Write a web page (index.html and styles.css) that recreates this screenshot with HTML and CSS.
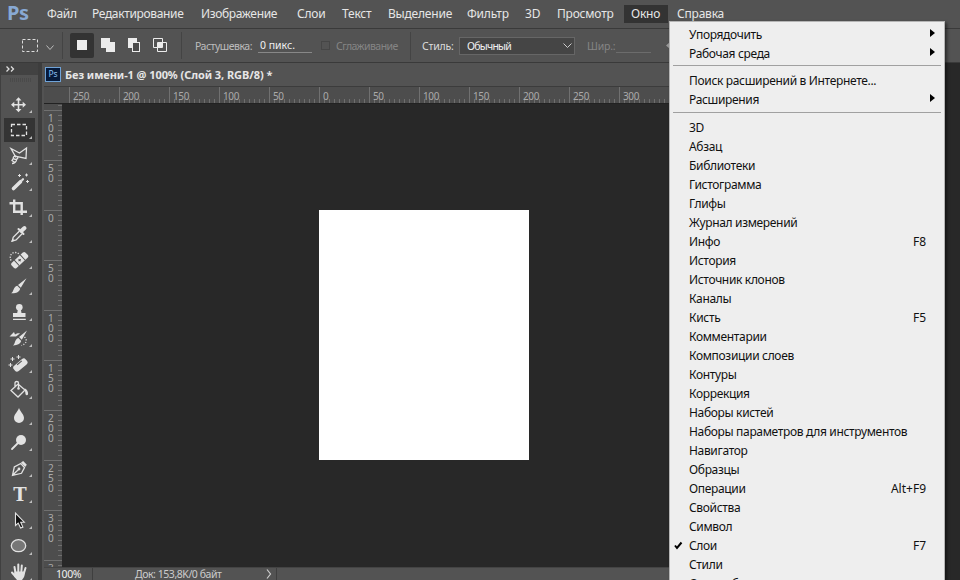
FILE: index.html
```html
<!DOCTYPE html>
<html lang="ru">
<head>
    <meta charset="UTF-8">
    <meta name="viewport" content="width=device-width, initial-scale=1.0">
    <title>Без имени-1</title>
    <link rel="stylesheet" href="styles.css">
</head>
<body>
    <nav class="menubar">
        <span class="logo">Ps</span>
        <span>Файл</span>
        <span>Редактирование</span>
        <span>Изображение</span>
        <span>Слои</span>
        <span>Текст</span>
        <span>Выделение</span>
        <span>Фильтр</span>
        <span>3D</span>
        <span>Просмотр</span>
        <span class="open">Окно</span>
        <span>Справка</span>
    </nav>

    <div class="options">
        <svg class="opt-marquee" width="62" height="33" viewBox="0 0 62 33">
            <rect x="22.5" y="10.5" width="15" height="12" fill="none" stroke="#ddd" stroke-dasharray="3 2"/>
            <path d="M46.500 16.500l3.500 4 3.500-4" fill="none" stroke="#bbb"/>
        </svg>
        <svg class="opt-modes" width="120" height="33" viewBox="62 0 120 33">
            <path d="M62.500 3v27M181.500 3v27" stroke="#444"/>
            <rect x="70" y="4" width="24" height="25" rx="2" fill="#333"/>
            <rect x="77" y="11" width="10" height="10" fill="#ececec"/>
            <path d="M101 9h9v4h5v10h-9v-4h-5z" fill="#ececec"/>
            <path d="M128 9h9v4h-4v6h-5z" fill="#ececec"/>
            <rect x="132.500" y="13.500" width="7" height="9" fill="#4a4a4a" stroke="#ececec"/>
            <path d="M153.500 9.500h9v9h-9zM157.500 13.500h9v9h-9z" fill="none" stroke="#ececec"/>
            <rect x="158" y="14" width="4" height="4" fill="#ececec"/>
        </svg>
        <span class="label feather">Растушевка:</span>
        <span class="field">0 пикс.</span>
        <span class="check"></span>
        <span class="label off">Сглаживание</span>
        <span class="label style">Стиль:</span>
        <span class="select">Обычный
            <svg width="9" height="6" viewBox="0 0 9 6"><path d="M.5.5l4 4 4-4" fill="none" stroke="#ccc"/></svg>
        </span>
        <span class="label off width">Шир.:</span>
        <span class="field empty"></span>
        <svg class="swap" width="10" height="9" viewBox="0 0 10 9"><path d="M0 4.500L4 1v2.500h6v2H4V8z" fill="#999"/></svg>
    </div>

    <main class="workspace">
        <aside class="tools">
            <div class="collapse"><svg width="9" height="6" viewBox="0 0 9 6"><path d="M.5.5L3 3 .5 5.500M5 .5L7.500 3 5 5.500" fill="none" stroke="#ddd" stroke-width="1.300"/></svg></div>
            <div class="grip"></div>
            <!-- move -->
            <svg class="tool" viewBox="0 0 32 26"><path d="M15.500 8v11.500M9.500 13.700h12" stroke="#e2e2e2" stroke-width="1.600"/><path d="M15.500 6.200l3 3.300h-6zM15.500 21.200l3-3.300h-6zM8 13.700l3.300-3v6zM23 13.700l-3.300-3v6z"/><path class="more" d="M29 19v3h-3z"/></svg>
            <!-- marquee -->
            <svg class="tool active" viewBox="0 0 32 26"><rect x="8.500" y="7.500" width="15" height="11" class="line" stroke-dasharray="3.500 2"/><path class="more" d="M29 19v3h-3z"/></svg>
            <!-- lasso -->
            <svg class="tool" viewBox="0 0 32 26"><path class="line" d="M13 14.500L8 5.500l8.500 4.500L23.500 5 23 15.500l-8.500-1.800c-2-1.200-5 0-4 1.600s5.500 1.200 4-1.600M13.500 16c.6 3-3 4.500-4.500 4.500M10.500 15l-1.500 2.500 3 2"/><path class="more" d="M29 19v3h-3z"/></svg>
            <!-- wand -->
            <svg class="tool" viewBox="0 0 32 26"><path class="cap" stroke-width="3.600" d="M10.500 19.500l7-6.800"/><path class="cap" stroke-width="2.200" d="M19.200 11l.8-.8"/><path class="line spark" d="M16.500 5v3M15 6.500h3M23.500 4.500v3M22 6h3M24.500 11v3M23 12.500h3"/><path class="more" d="M29 19v3h-3z"/></svg>
            <!-- crop -->
            <svg class="tool" viewBox="0 0 32 26"><path class="line thick" d="M6.500 8.300h12.200V20M11.200 4.500v12.200H24"/><path class="more" d="M29 19v3h-3z"/></svg>
            <!-- eyedropper -->
            <svg class="tool" viewBox="0 0 32 26"><path class="cap" stroke-width="4" d="M18.500 9.800L21.500 7"/><path class="cap" stroke-width="2" d="M15.500 8l5 5"/><path class="line" d="M16.500 10l-6.300 6.300-.9 3.800 3.800-1.200 6-6.100"/><path d="M8 21l1.500-3.200L12 19.500z"/><path class="more" d="M29 19v3h-3z"/></svg>
            <!-- healing brush -->
            <svg class="tool" viewBox="0 0 32 26"><g transform="rotate(-43 16.500 13)"><rect x="7" y="9.800" width="19" height="7" rx="2"/><path d="M12.500 9.500v7.600M20.500 9.500v7.600" stroke="#505050"/><path d="M16.500 11.700v3M15 13.200h3" stroke="#505050"/></g><path class="line" stroke-dasharray="1.200 1.500" d="M8 13.500C6 9 8.500 5.500 12 5.500s4 2 4.500 3"/><path class="more" d="M29 19v3h-3z"/></svg>
            <!-- brush -->
            <svg class="tool" viewBox="0 0 32 26"><path d="M23.500 5.200L15 12l2.800 2.800zM14.300 12.800l2.900 3c-.8 3.500-4.500 4.800-9 4.500 2.700-1.300 1.800-6.300 6.100-7.500z"/><path class="more" d="M29 19v3h-3z"/></svg>
            <!-- stamp -->
            <svg class="tool" viewBox="0 0 32 26"><circle cx="16.300" cy="8.300" r="3.300"/><path d="M15 10h2.800l.7 4h4v4H10v-4h4.200zM10 19.700h12.800V21H10z"/><path class="more" d="M29 19v3h-3z"/></svg>
            <!-- history brush -->
            <svg class="tool" viewBox="0 0 32 26"><path d="M24 5.500L16 12l2.800 2.800zM15.400 13l2.800 3c-1 3-4 4.500-8.200 4.400 2.500-1.400 1.400-6.200 5.400-7.400zM6.500 11.500L11 7l1 2.500c2-1.500 4-1.500 5-1l-4 3z"/><path class="line" stroke-dasharray="1.200 1.500" d="M21.500 12c3 3 2 7-3 8.500"/><path class="more" d="M29 19v3h-3z"/></svg>
            <!-- background eraser -->
            <svg class="tool" viewBox="0 0 32 26"><g transform="rotate(-40 17 14)"><rect x="9.500" y="10.800" width="15.500" height="7" rx="2.600"/><path d="M15 12h6" stroke="#505050"/></g><path class="line spark" d="M9.500 6v4M7.500 8h4M15.500 4v4M13.500 6h4M7.500 12v4M5.500 14h4"/><path class="more" d="M29 19v3h-3z"/></svg>
            <!-- bucket -->
            <svg class="tool" viewBox="0 0 32 26"><path class="line" d="M15 7l7 6-7 7-7-6.500zM12 10.500V6c0-2 3.500-2 3.500 0v5"/><circle cx="15.500" cy="11.500" r="1.300"/><path d="M21.500 11.500c2.500.5 4 3.500 3.500 6-1 1.500-3 .5-2.600-1.500z"/><path class="more" d="M29 19v3h-3z"/></svg>
            <!-- blur -->
            <svg class="tool" viewBox="0 0 32 26"><path d="M16 5c1.500 4 5 6.500 5 10a5 5 0 0 1-10 0c0-3.500 3.500-6 5-10z"/><path class="more" d="M29 19v3h-3z"/></svg>
            <!-- dodge -->
            <svg class="tool" viewBox="0 0 32 26"><circle cx="18" cy="11" r="5"/><path class="cap" stroke-width="1.800" d="M14.500 14.500L9 20"/><path class="more" d="M29 19v3h-3z"/></svg>
            <!-- pen -->
            <svg class="tool" viewBox="0 0 32 26"><path class="line" d="M9.500 20.300L11.300 12l6.500-3.500 3.700 4-3 5.800zM9.500 20.300l6-5.800"/><circle cx="16" cy="14" r="1.400"/><path d="M18 7.500L20.200 6l3.600 3.800-1.600 2.300z"/><path class="more" d="M29 19v3h-3z"/></svg>
            <!-- type -->
            <svg class="tool" viewBox="0 0 32 26"><text x="17" y="19.500" text-anchor="middle" class="type">T</text><path class="more" d="M29 19v3h-3z"/></svg>
            <!-- path selection -->
            <svg class="tool" viewBox="0 0 32 26"><path d="M12.500 6v12.500l2.700-2.400 2.400 5 2.300-1-2.200-4.900h3.600z" fill="#111" stroke="#e2e2e2" stroke-width="1.100"/><path class="more" d="M29 19v3h-3z"/></svg>
            <!-- ellipse -->
            <svg class="tool" viewBox="0 0 32 26"><ellipse cx="15.500" cy="12.700" rx="7.200" ry="6" fill="#777" stroke="#e2e2e2" stroke-width="1.300"/><path class="more" d="M29 19v3h-3z"/></svg>
            <!-- hand -->
            <svg class="tool" viewBox="0 0 32 26"><path class="cap" stroke-width="2" d="M12.500 14l-1-6M15.300 13V5.500M18.300 13l.5-6.500M21 14l1.500-5M12.500 17.500L9 13.500"/><path d="M11.500 12.500h10.500c0 5-1.500 6.500-3 8.500h-5c-1-1.500-2.500-2.500-3-4z"/><path class="more" d="M29 19v3h-3z"/></svg>
        </aside>

        <section class="document">
            <div class="tab"><span class="badge">Ps</span><span class="tab-title">Без имени-1 @ 100% (Слой 3, RGB/8) *</span></div>
            <div class="ruler-x">
                <span>250</span><span>200</span><span>150</span><span>100</span><span>50</span><span>0</span><span>50</span><span>100</span><span>150</span><span>200</span><span>250</span><span>300</span>
            </div>
            <div class="view">
                <div class="ruler-y">
                    <span>1<br>0<br>0</span>
                    <span>5<br>0</span>
                    <span>0</span>
                    <span>5<br>0</span>
                    <span>1<br>0<br>0</span>
                    <span>1<br>5<br>0</span>
                    <span>2<br>0<br>0</span>
                    <span>2<br>5<br>0</span>
                    <span>3<br>0<br>0</span>
                    <span>3</span>
                </div>
                <div class="canvas"><div class="page"></div></div>
            </div>
            <div class="status">
                <span class="zoom">100%</span>
                <span class="doc-size">Док: 153,8K/0 байт</span>
                <svg width="6" height="10" viewBox="0 0 6 10"><path d="M1 .5L4.500 5 1 9.500" fill="none" stroke="#ccc" stroke-width="1.200"/></svg>
                <span class="divider"></span>
            </div>
        </section>
    </main>

    <ul class="dropdown">
        <li class="sub"><span>Упорядочить</span></li>
        <li class="sub"><span>Рабочая среда</span></li>
        <li class="sep"></li>
        <li><span>Поиск расширений в Интернете...</span></li>
        <li class="sub"><span>Расширения</span></li>
        <li class="sep"></li>
        <li><span>3D</span></li>
        <li><span>Абзац</span></li>
        <li><span>Библиотеки</span></li>
        <li><span>Гистограмма</span></li>
        <li><span>Глифы</span></li>
        <li><span>Журнал измерений</span></li>
        <li><span>Инфо</span><kbd>F8</kbd></li>
        <li><span>История</span></li>
        <li><span>Источник клонов</span></li>
        <li><span>Каналы</span></li>
        <li><span>Кисть</span><kbd>F5</kbd></li>
        <li><span>Комментарии</span></li>
        <li><span>Композиции слоев</span></li>
        <li><span>Контуры</span></li>
        <li><span>Коррекция</span></li>
        <li><span>Наборы кистей</span></li>
        <li><span>Наборы параметров для инструментов</span></li>
        <li><span>Навигатор</span></li>
        <li><span>Образцы</span></li>
        <li><span>Операции</span><kbd>Alt+F9</kbd></li>
        <li><span>Свойства</span></li>
        <li><span>Символ</span></li>
        <li class="checked">
            <svg class="tick" width="9" height="9" viewBox="0 0 9 9"><path d="M1 4.500l2 2.500L7.500 1.500" fill="none" stroke="#000" stroke-width="2"/></svg>
            <span>Слои</span><kbd>F7</kbd>
        </li>
        <li><span>Стили</span></li>
        <li><span>Стили абзацев</span></li>
    </ul>
</body>
</html>
```
FILE: styles.css
```css
* {
    box-sizing: border-box;
}

body {
    margin: 0;
    width: 960px;
    height: 580px;
    overflow: hidden;
    display: flex;
    flex-direction: column;
    background-color: #282828;
    color: #e6e6e6;
    font-family: "Noto Sans", "Open Sans", sans-serif;
    font-size: 12px;
    white-space: nowrap;
}

.menubar {
    display: grid;
    grid-template-columns: 40px 45px 109px 96px 45px 46px 79px 58px 32px 74px 46px 60px;
    align-items: center;
    height: 29px;
    flex-shrink: 0;
    padding-left: 7px;
    background-color: #535353;
    border-bottom: 1px solid #3a3a3a;
    letter-spacing: -0.35px;
}

.menubar span {
    line-height: 18px;
}

.menubar span:nth-child(n+5) {
    letter-spacing: -0.2px;
}

.menubar .logo {
    color: #88a9d3;
    font-size: 20px;
    font-weight: bold;
    line-height: 26px;
    margin-top: -3px;
}

.menubar .open {
    margin: 0 10px 0 -7px;
    padding-left: 7px;
    width: 44px;
    background-color: #333;
}

.options {
    display: flex;
    align-items: center;
    height: 34px;
    flex-shrink: 0;
    background-color: #535353;
    border-bottom: 1px solid #3a3a3a;
    font-size: 10.5px;
}

.options > * {
    flex-shrink: 0;
}

.label {
    color: #bdbdbd;
}

.feather {
    width: 76px;
    padding-left: 13px;
    letter-spacing: -0.5px;
}

.field {
    width: 54px;
    height: 15px;
    line-height: 14px;
    padding-left: 2px;
    border-bottom: 1px solid #888;
    color: #f0f0f0;
}

.field.empty {
    width: 35px;
    border-color: #6c6c6c;
}

.check {
    width: 9px;
    height: 9px;
    margin: 0 6px 0 9px;
    border: 1px solid #464646;
}

.off {
    width: 74px;
    color: #858585;
    letter-spacing: -0.55px;
}

.style {
    width: 49px;
    height: 28px;
    line-height: 28px;
    padding-left: 11px;
    border-left: 1px solid #444;
    color: #dcdcdc;
    letter-spacing: -0.2px;
}

.select {
    display: flex;
    align-items: center;
    justify-content: space-between;
    width: 116px;
    height: 18px;
    padding: 0 2px 0 7px;
    background-color: #454545;
    border: 1px solid #666;
    color: #f0f0f0;
    letter-spacing: -0.75px;
}

.off.width {
    width: 29px;
    margin-left: 12px;
    letter-spacing: -0.2px;
}

.swap {
    margin-left: 15px;
}

.workspace {
    display: flex;
    flex: 1;
    min-height: 0;
}

.tools {
    display: flex;
    flex-direction: column;
    width: 42px;
    flex-shrink: 0;
    overflow: hidden;
    background-color: #535353;
    border-left: 1px solid #404040;
    border-right: 4px solid #3d3d3d;
}

.collapse {
    display: flex;
    align-items: center;
    height: 12px;
    padding-left: 5px;
    flex-shrink: 0;
    background-color: #424242;
}

.grip {
    width: 21px;
    height: 4px;
    margin: 3px 0 9px 9px;
    flex-shrink: 0;
    background: repeating-linear-gradient(90deg, #4a4a4a 0 1px, #535353 1px 2px);
}

.tool {
    width: 32px;
    height: 26px;
    margin-left: 2px;
    flex-shrink: 0;
    fill: #e2e2e2;
}

.tool.active {
    background: linear-gradient(#343434, #343434) 1px 1px / 31px 24px no-repeat;
}

.more {
    fill: #bdbdbd;
}

.line {
    fill: none;
    stroke: #e2e2e2;
    stroke-width: 1.3;
}

.line.spark {
    stroke-width: 1;
}

.line.thick {
    stroke-width: 2.4;
}

.cap {
    fill: none;
    stroke: #e2e2e2;
    stroke-linecap: round;
}

.type {
    font: bold 18px "DejaVu Serif", serif;
}

.document {
    display: flex;
    flex-direction: column;
    width: 627px;
    padding-left: 2px;
    background-color: #535353;
}

.tab {
    display: flex;
    align-items: center;
    height: 23px;
    flex-shrink: 0;
    font-size: 11px;
    font-weight: bold;
    letter-spacing: -0.07px;
}

.badge {
    width: 16px;
    height: 15px;
    margin: 0 4px 0 1px;
    background-color: #061a3a;
    border: 1px solid #6fa3d8;
    color: #8cc0f0;
    font-size: 8.5px;
    font-weight: normal;
    line-height: 12px;
    text-align: center;
}

.ruler-x {
    display: flex;
    height: 18px;
    flex-shrink: 0;
    padding-left: 25px;
    overflow: hidden;
    border-top: 1px solid #3c3c3c;
    border-bottom: 1px solid #222;
    background: repeating-linear-gradient(90deg, #6e6e6e 0 1px, transparent 1px 5px) 25px 12px / 100% 4px no-repeat #4d4d4d;
}

.ruler-x span {
    width: 50px;
    flex-shrink: 0;
    padding-left: 3px;
    border-left: 1px solid #707070;
    color: #aaa;
    font-size: 10px;
    line-height: 18px;
    letter-spacing: -0.4px;
}

.view {
    display: flex;
    flex: 1;
    min-height: 0;
}

.ruler-y {
    width: 18px;
    flex-shrink: 0;
    padding-top: 6px;
    overflow: hidden;
    background: repeating-linear-gradient(#6e6e6e 0 1px, transparent 1px 5px) 14px 1px / 4px 100% no-repeat #4d4d4d;
}

.ruler-y span {
    display: block;
    height: 50px;
    padding: 2px 0 0 4px;
    border-top: 1px solid #707070;
    color: #aaa;
    font-size: 10px;
    line-height: 10px;
}

.canvas {
    flex: 1;
    background-color: #282828;
}

.page {
    width: 210px;
    height: 250px;
    margin: 106px 0 0 257px;
    background-color: #fff;
}

.status {
    display: flex;
    align-items: center;
    height: 13px;
    flex-shrink: 0;
    font-size: 10.5px;
    line-height: 13px;
    border-top: 1px solid #444;
}

.zoom {
    width: 49px;
    padding-left: 12px;
    border-right: 1px solid #3f3f3f;
    color: #f0f0f0;
    letter-spacing: -0.4px;
}

.doc-size {
    width: 173px;
    padding-left: 42px;
    color: #ccc;
    letter-spacing: -0.45px;
}

.divider {
    height: 13px;
    margin-left: 4px;
    border-left: 1px solid #3f3f3f;
}

/* opened "Окно" menu, lies over the workspace */
.dropdown {
    position: absolute;
    top: 21px;
    left: 669px;
    width: 276px;
    height: 559px;
    margin: 0;
    padding: 3px 0 0;
    overflow: hidden;
    list-style: none;
    background-color: #eee;
    border: 1px solid #b5b5b5;
    border-bottom: 0;
    box-shadow: 2px 2px 3px rgba(0, 0, 0, 0.5);
    color: #111;
    letter-spacing: -0.33px;
}

.dropdown li {
    position: relative;
    display: flex;
    justify-content: space-between;
    height: 19px;
    padding: 0 18px 0 19px;
    line-height: 19px;
}

.dropdown kbd {
    font-family: inherit;
    font-size: inherit;
    letter-spacing: 0;
}

.dropdown .sep {
    height: 1px;
    margin: 2px 3px 5px;
    background-color: #a0a0a0;
}

.dropdown .sep:nth-child(6) {
    margin-top: 3px;
}

.sub::after {
    content: "";
    position: absolute;
    top: 4px;
    right: 9px;
    border: 4px solid transparent;
    border-left: 5px solid #000;
    border-right: 0;
}

.tick {
    position: absolute;
    top: 5px;
    left: 4px;
}
```
